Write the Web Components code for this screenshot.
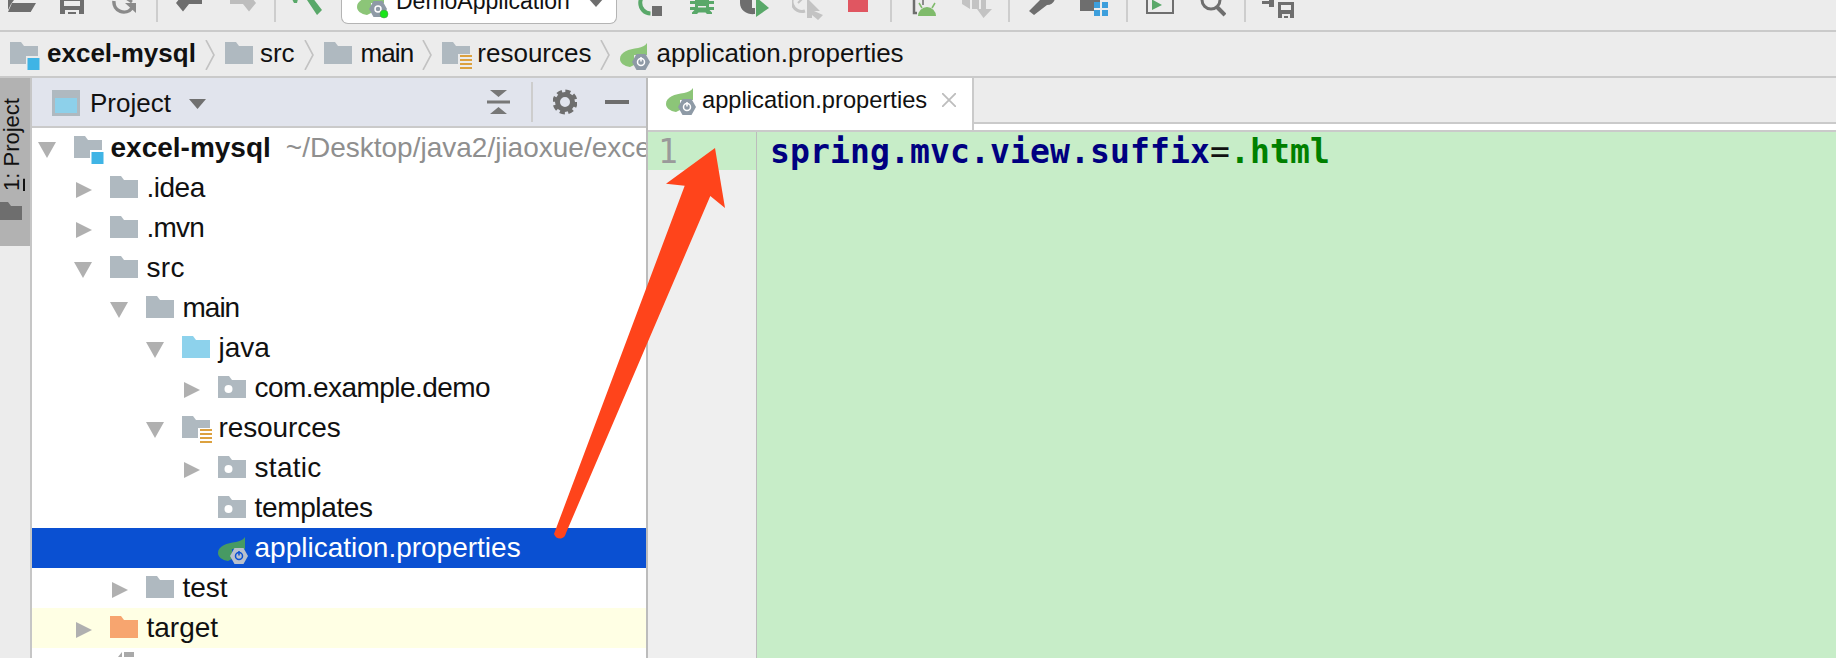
<!DOCTYPE html>
<html lang="en">
<head>
<meta charset="utf-8">
<title>application.properties</title>
<style>
html,body{margin:0;padding:0;width:1836px;height:658px;overflow:hidden;background:#ececec}
</style>
</head>
<body>
<ide-app>
  <ide-toolbar slot="toolbar">
    <tb-icon name="open" w="28" style="margin-left:8px"></tb-icon>
    <tb-icon name="save" w="24" style="margin-left:24px"></tb-icon>
    <tb-icon name="sync" w="24" style="margin-left:28px"></tb-icon>
    <tb-sep style="margin-left:20px"></tb-sep>
    <tb-icon name="undo" w="26" style="margin-left:18px"></tb-icon>
    <tb-icon name="redo" w="26" style="margin-left:28px"></tb-icon>
    <tb-sep style="margin-left:18px"></tb-sep>
    <tb-icon name="hammer" w="30" style="margin-left:16px"></tb-icon>
    <run-config style="margin-left:19px">DemoApplication</run-config>
    <tb-icon name="rerun" w="24" style="margin-left:21px"></tb-icon>
    <tb-icon name="bug" w="24" style="margin-left:28px"></tb-icon>
    <tb-icon name="coverage" w="30" style="margin-left:26px"></tb-icon>
    <tb-icon name="profile" w="32" style="margin-left:22px"></tb-icon>
    <tb-icon name="stop" w="20" style="margin-left:24px"></tb-icon>
    <tb-sep style="margin-left:22px"></tb-sep>
    <tb-icon name="android" w="26" style="margin-left:20px"></tb-icon>
    <tb-icon name="avd" w="30" style="margin-left:24px"></tb-icon>
    <tb-sep style="margin-left:16px"></tb-sep>
    <tb-icon name="wrench" w="27" style="margin-left:18px"></tb-icon>
    <tb-icon name="structure" w="28" style="margin-left:25px"></tb-icon>
    <tb-sep style="margin-left:18px"></tb-sep>
    <tb-icon name="preview" w="28" style="margin-left:18px"></tb-icon>
    <tb-icon name="search" w="28" style="margin-left:24px"></tb-icon>
    <tb-sep style="margin-left:18px"></tb-sep>
    <tb-icon name="last" w="32" style="margin-left:16px"></tb-icon>
  </ide-toolbar>

  <ide-crumbs slot="crumbs">
    <crumb-item icon="module" first bold>excel-mysql</crumb-item>
    <crumb-item icon="folder">src</crumb-item>
    <crumb-item icon="folder" style="letter-spacing:-.9px;--gap:9px">main</crumb-item>
    <crumb-item icon="res">resources</crumb-item>
    <crumb-item icon="spring" plain style="--gap:8px">application.properties</crumb-item>
  </ide-crumbs>

  <tool-stripe slot="stripe"></tool-stripe>

  <project-panel slot="panel">
    <tree-row level="0" arrow="down" icon="module"><b>excel-mysql</b><tree-hint>~/Desktop/java2/jiaoxue/exce</tree-hint></tree-row>
    <tree-row level="1" arrow="right" icon="folder" style="letter-spacing:-.5px">.idea</tree-row>
    <tree-row level="1" arrow="right" icon="folder" style="letter-spacing:-.8px">.mvn</tree-row>
    <tree-row level="1" arrow="down" icon="folder" style="letter-spacing:.3px">src</tree-row>
    <tree-row level="2" arrow="down" icon="folder" style="letter-spacing:-1px">main</tree-row>
    <tree-row level="3" arrow="down" icon="java">java</tree-row>
    <tree-row level="4" arrow="right" icon="pkg" style="letter-spacing:-.55px">com.example.demo</tree-row>
    <tree-row level="3" arrow="down" icon="res" style="letter-spacing:-.1px">resources</tree-row>
    <tree-row level="4" arrow="right" icon="pkg" style="letter-spacing:.3px">static</tree-row>
    <tree-row level="4" icon="pkg" style="letter-spacing:-.35px">templates</tree-row>
    <tree-row level="4" icon="spring-sel" selected>application.properties</tree-row>
    <tree-row level="2" arrow="right" icon="folder">test</tree-row>
    <tree-row level="1" arrow="right" icon="target" tinted>target</tree-row>
    <tree-row level="1" icon="lib"></tree-row>
  </project-panel>

  <ide-editor slot="editor"></ide-editor>
  <arrow-overlay slot="overlay"></arrow-overlay>
</ide-app>

<script>
function def(name, css, html){
  customElements.define(name, class extends HTMLElement{
    connectedCallback(){
      if(this.shadowRoot) return;
      const r=this.attachShadow({mode:'open'});
      r.innerHTML='<style>'+css+'</style>'+(typeof html==='function'?html(this):html);
    }
  });
}
const D='#6e6e6e', L='#c3c3c3', G='#59a869', F='#afb9c0';
const TB={
 open:`<path fill="${D}" d="M4 3H28L22.700 12H0zM0 0H6L3 4 0 10z"/>`,
 save:`<path fill="${D}" fill-rule="evenodd" d="M0-4H24V14H0zM4 1V6H20V1zM5 10V14H19V10z"/><rect x="8" y="12" width="8" height="2" fill="${D}"/>`,
 sync:`<path fill="none" stroke="#8a8a8a" stroke-width="3.500" d="M2 1A10 10 0 0 0 20 8"/><path fill="#8a8a8a" d="M13 3H24V13z"/><path fill="none" stroke="#8a8a8a" stroke-width="3" d="M8-6L20 2"/>`,
 undo:`<path fill="${D}" d="M26-2V4H13L7 11.500 0 3 4-2z"/>`,
 redo:`<path fill="#bdbdbd" d="M0-2V4H13L19 11.500 26 3 22-2z"/>`,
 hammer:`<path fill="${G}" d="M13-3H20L30 10 25 15zM0-1H6L5 3H2z"/>`,
 rerun:`<path fill="none" stroke="${G}" stroke-width="4" d="M13-7.500A10.500 10.500 0 0 0 12.500 13.500"/><rect x="14" y="6" width="10" height="10" fill="${D}"/>`,
 bug:`<path fill="${G}" fill-rule="evenodd" d="M5-4H19V1H24V4H19V7H24V10H19.500L22 12.500V14H17L15.500 12.500H8.500L7 14H2V12.500L4.500 10H0V7H5V4H0V1H5zM8 6V7.500H16V6z"/>`,
 coverage:`<path fill="${D}" d="M0-4H12V8L15 8V14C8 15 0 11 0 3z"/><path fill="${G}" d="M16-3L29 8 16 17z"/>`,
 profile:`<path fill="none" stroke="${L}" stroke-width="3" d="M7-8A8 8 0 0 0 13 11"/><path fill="none" stroke="${L}" stroke-width="2" d="M6 3L11-2"/><path fill="${L}" d="M15-2L28 11H22L31 15 26 20 20 15V18H15z"/>`,
 stop:`<rect y="-4" width="20" height="16" fill="#e05661"/>`,
 android:`<path fill="none" stroke="${D}" stroke-width="2.500" d="M2-4V13H5"/><path fill="none" stroke="${D}" stroke-width="1.500" d="M11 0V5"/><path fill="#7fbb6b" d="M6 16A9 9 0 0 1 24 16z"/><path stroke="#7fbb6b" stroke-width="1.500" d="M7 3L10 8M23 3L20 8"/>`,
 avd:`<path fill="${L}" d="M0-4H8V9L0 4zM10-4H17V9H10z"/><path fill="${L}" d="M19-4H24V9H30L21.500 18 15 9H19z"/>`,
 wrench:`<path fill="${D}" d="M1 11L13-1H27Q25 5 19 5L6 15z"/>`,
 structure:`<path fill="${D}" d="M0 0H20V3H14V11H0z"/><rect x="14" y="2" width="6" height="6" fill="#3d9fdc"/><rect x="22" y="2" width="6" height="6" fill="#3d9fdc"/><rect x="14" y="10" width="6" height="6" fill="#3d9fdc"/><rect x="22" y="10" width="6" height="6" fill="#3d9fdc"/>`,
 preview:`<path fill="none" stroke="${D}" stroke-width="2" d="M1-4V13H27V-4"/><path fill="${G}" d="M6 0H7L16 5 6 10z"/>`,
 search:`<circle cx="13" cy="0" r="9" fill="none" stroke="${D}" stroke-width="3"/><path stroke="${D}" stroke-width="4" d="M19 7L27 15"/>`,
 last:`<path fill="${D}" d="M0 1H7V-2H12V7H7V4H0z"/><path fill="${D}" fill-rule="evenodd" d="M16 2H32V18H16zM19 5V10H29V5zM20 14V18H28V14z"/><rect x="22" y="16" width="4" height="2" fill="${D}"/>`
};
def('tb-icon',':host{display:block;flex:none}svg{display:block}',
  h=>{const w=h.getAttribute('w');return `<svg width="${w}" height="24" viewBox="0 0 ${w} 24">${TB[h.getAttribute('name')]}</svg>`});
def('tb-sep',':host{display:block;flex:none;width:2px;height:22px;background:#cdcdcd}','');
def('run-config',
 `:host{display:flex;flex:none;box-sizing:border-box;width:276px;height:24px;background:#fff;border:1px solid #b4b4b4;border-top:0;border-radius:0 0 7px 7px;align-items:flex-end;overflow:hidden;padding-left:15px;position:relative}
  span{font:23px/28px 'Liberation Sans',sans-serif;color:#111;margin-left:9px;padding-bottom:8px;white-space:nowrap}
  .ic{position:relative;width:30px;height:24px;flex:none}
  svg{position:absolute;left:0;top:0}
  .caret{position:absolute;left:246px;top:-1px}`,
 `<div class="ic"><svg width="32" height="24" viewBox="0 0 32 24"><path fill="#8cc578" d="M27-8C25-5 22-4 18-3 9-2 0 1 0 8 0 12 4 15 10 16L14 14V4H27z"/><path fill="#8e9aa6" d="M12 10L16.500 2H25.500L30 10 25.500 18H16.500z"/><circle cx="21" cy="10" r="3" fill="none" stroke="#fff" stroke-width="1.500"/><circle cx="27" cy="15" r="4" fill="#19e619" stroke="#5a8a5a" stroke-width=".5"/></svg></div><span><slot></slot></span><svg class="caret" width="16" height="8" viewBox="0 0 16 8"><path fill="${D}" d="M0-1H16L8 8z"/></svg>`);
def('ide-toolbar',':host{display:flex;box-sizing:border-box;height:32px;border-bottom:2px solid #cacaca;background:#ececec;overflow:hidden;align-items:flex-start}','<slot></slot>');

const FOLDER='M0 0H11L14 4H28V22H0Z';
const FI={
 folder:`<path fill="${F}" d="${FOLDER}"/>`,
 java:`<path fill="#8dd2ec" d="${FOLDER}"/>`,
 target:`<path fill="#f7a56f" d="${FOLDER}"/>`,
 pkg:`<path fill="${F}" d="${FOLDER}"/><circle cx="10.500" cy="13" r="4" fill="#fff"/>`,
 module:`<path fill="${F}" d="M0 0H11L14 4H28V14H16V22H0Z"/><rect x="17.500" y="16" width="12" height="12" fill="#3fb4e5"/>`,
 res:`<path fill="${F}" d="M0 0H11L14 4H28V12H16V22H0Z"/><path stroke="#dca13f" stroke-width="2" d="M18 14H30M18 18H30M18 22H30M18 26H30"/>`,
 lib:`<path fill="#a9a9a9" d="M8 1L12-4V1zM14-4H24V1H14z"/>`
};
const spring=(leaf,hex,pw)=>`<g transform="translate(0 1)"><path fill="${leaf}" d="M27 0C25 3 22 4 18 5 9 6 0 9 0 16 0 20 4 23 10 24L14 22V12H27z"/><path fill="${hex}" d="M12 19L16.500 11H25.500L30 19 25.500 27H16.500z"/><circle cx="21" cy="19" r="3.500" fill="none" stroke="${pw}" stroke-width="1.500"/><path stroke="${pw}" stroke-width="1.500" d="M21 14V18.500"/></g>`;
FI.spring=spring('#8cc578','#8e9aa6','#fff');
FI['spring-sel']=spring('#479a63','#b9c0cc','#0a50d2');
def('file-icon',':host{display:block;flex:none;width:28px;height:22px}svg{display:block;overflow:visible}',
  h=>`<svg width="28" height="22" viewBox="0 0 28 22">${FI[h.getAttribute('name')]}</svg>`);

def('crumb-item',
 `:host{display:flex;align-items:center;flex:none;height:44px;font:26px/44px 'Liberation Sans',sans-serif;color:#111}
  :host([bold]){font-weight:700}
  svg.ch{flex:none;margin:2px 10px 0 9px}
  file-icon{margin-bottom:2px;margin-right:var(--gap,7px)}
  :host([first]) file-icon{margin-right:9px}
  span{padding-bottom:2px;white-space:nowrap}`,
 h=>`${h.hasAttribute('first')?'':'<svg class="ch" width="10" height="30" viewBox="0 0 10 30"><path fill="none" stroke="#c2c2c2" stroke-width="1.600" d="M1 0L9 15 1 30"/></svg>'}<file-icon name="${h.getAttribute('icon')}"></file-icon><span><slot></slot></span>`);
def('ide-crumbs',':host{display:flex;box-sizing:border-box;height:46px;border-bottom:2px solid #cacaca;background:#ececec;padding-left:10px;overflow:hidden}','<slot></slot>');

def('tool-stripe',
 `:host{display:block;box-sizing:border-box;width:32px;border-right:2px solid #c6c6c6;background:#ececec}
  .btn{box-sizing:border-box;width:30px;height:168px;background:#b2b2b2;padding-top:19px;overflow:hidden}
  .t{writing-mode:vertical-rl;transform:rotate(180deg);font:22px/22px 'Liberation Sans',sans-serif;color:#111;height:94px;margin-left:1px;white-space:nowrap}
  u{text-decoration:underline}
  svg{display:block;margin-top:11px}`,
 `<div class="btn"><div class="t"><u>1</u>: Project</div><svg width="22" height="18" viewBox="0 0 22 18"><path fill="#6e6e6e" d="M0 0H8L11 4H22V18H0z"/></svg></div>`);

def('project-panel',
 `:host{display:flex;flex-direction:column;box-sizing:border-box;width:616px;border-right:2px solid #bcbcbc;background:#fff;overflow:hidden;font:28px/40px 'Liberation Sans',sans-serif;color:#111}
  header{display:flex;align-items:center;flex:none;box-sizing:border-box;height:50px;border-bottom:2px solid #cacaca;background:#e1e4ed;padding-left:20px;font:26px/48px 'Liberation Sans',sans-serif}
  .ico{margin-top:2px}
  .p{margin-left:10px;margin-top:2px}
  .caret{margin-left:18px;margin-top:4px}
  .col{margin-left:281px}
  .sep{width:2px;height:40px;background:#cdcdcd;margin-left:21px}
  .gear{margin-left:20px}
  .min{margin-left:28px}
  svg{display:block;flex:none}`,
 `<header>
   <svg class="ico" width="28" height="26" viewBox="0 0 28 26"><rect width="28" height="26" fill="#afb9c0"/><rect x="3" y="8" width="22" height="15" fill="#8dd0ea"/></svg>
   <span class="p">Project</span>
   <svg class="caret" width="17" height="10" viewBox="0 0 17 10"><path fill="#707070" d="M0 0H17L8.500 10z"/></svg>
   <svg class="col" width="23" height="24" viewBox="0 0 23 24"><path fill="#777" d="M3 0H20L11.500 7zM3 24H20L11.500 17zM0 10.500H23V13.500H0z"/></svg>
   <div class="sep"></div>
   <svg class="gear" width="24" height="26" viewBox="0 0 24 26"><circle cx="12" cy="13" r="7.500" fill="none" stroke="#6e6e6e" stroke-width="5"/><circle cx="12" cy="13" r="10.500" fill="none" stroke="#6e6e6e" stroke-width="4" stroke-dasharray="5 3.250"/></svg>
   <svg class="min" width="24" height="4" viewBox="0 0 24 4"><rect width="24" height="4" fill="#6e6e6e"/></svg>
  </header><div><slot></slot></div>`);

def('tree-hint',":host{color:#8f8f8f;margin-left:15px;font-weight:400}",'<slot></slot>');
def('tree-row',
 `:host{display:flex;align-items:center;box-sizing:border-box;height:40px;white-space:nowrap;overflow:hidden;padding-left:calc(var(--l)*36px + 6px)}
  :host([selected]){background:#0a50d2;color:#fff}
  :host([tinted]){background:#ffffe4}
  .a{flex:none;width:18px;height:18px;margin-right:18px;margin-top:3px}
  file-icon{margin-bottom:2px;margin-right:8.500px}
  svg{display:block}`,
 h=>{
  h.style.setProperty('--l',h.getAttribute('level'));
  const a=h.getAttribute('arrow');
  const p=a==='down'?'<path fill="#b0b0b0" d="M0 1H18L9 17z"/>':a==='right'?'<path fill="#b0b0b0" d="M2 1L18 9 2 17z"/>':'';
  return `<div class="a"><svg width="18" height="18" viewBox="0 0 18 18">${p}</svg></div><file-icon name="${h.getAttribute('icon')}"></file-icon><span><slot></slot></span>`;
 });

def('ide-editor',
 `:host{display:flex;flex-direction:column;flex:1;min-width:0;background:#fff;overflow:hidden}
  .tabs{display:flex;flex:none;height:46px;box-sizing:border-box;background:#ececec;border-bottom:2px solid #cacaca}
  .tab{display:flex;align-items:flex-start;height:52px;padding:7px 0 0 18px;margin-bottom:-8px;box-sizing:border-box;width:326px;background:#fff;border-right:2px solid #cacaca;font:23.700px/30px 'Liberation Sans',sans-serif;color:#111;position:relative}
  .tab file-icon{margin-top:2px;margin-right:8px}
  .tab svg{margin:8px 0 0 15px;flex:none}
  .band{flex:none;height:8px;box-sizing:border-box;border-bottom:2px solid #cacaca;background:#fff}
  .body{flex:1;display:grid;grid-template-columns:109px 1fr;min-height:0}
  .gut{background:#efefef;border-right:1px solid #bcbcbc}
  .gl{box-sizing:border-box;height:38px;background:#c7edc8;padding:1px 0 0 10px;font:33px/38px 'DejaVu Sans Mono',monospace;color:#9a9a9a}
  .code{background:#c7edc8;padding:1px 0 0 13px;font:700 33px/38px 'DejaVu Sans Mono',monospace;letter-spacing:.13px;color:#000080;white-space:pre}
  .eq{color:#111;font-weight:400}
  .val{color:#008000}`,
 `<div class="tabs"><div class="tab"><file-icon name="spring"></file-icon><span>application.properties</span><svg width="14" height="14" viewBox="0 0 14 14"><path stroke="#bdbdbd" stroke-width="1.800" fill="none" d="M0 0L14 14M14 0L0 14"/></svg></div></div>
  <div class="band"></div>
  <div class="body"><div class="gut"><div class="gl">1</div></div><div class="code">spring.mvc.view.suffix<span class="eq">=</span><span class="val">.html</span></div></div>`);

def('arrow-overlay',
 `:host{position:absolute;left:0;top:0;width:1836px;height:658px;pointer-events:none}
  svg{display:block}`,
 `<svg width="1836" height="658" viewBox="0 0 1836 658"><path fill="#ff441b" d="M715 148L666 183.700 684.700 185.700 554 534Q556 539 561 538.500 565 537.500 566 533L710.300 196 725 208z"/></svg>`);

def('ide-app',
 `:host{display:block;position:relative;width:1836px;height:658px;overflow:hidden;background:#ececec;font-family:'Liberation Sans',sans-serif}
  .body{display:flex;height:580px}`,
 `<slot name="toolbar"></slot><slot name="crumbs"></slot><div class="body"><slot name="stripe"></slot><slot name="panel"></slot><slot name="editor"></slot></div><slot name="overlay"></slot>`);
</script>
</body>
</html>
